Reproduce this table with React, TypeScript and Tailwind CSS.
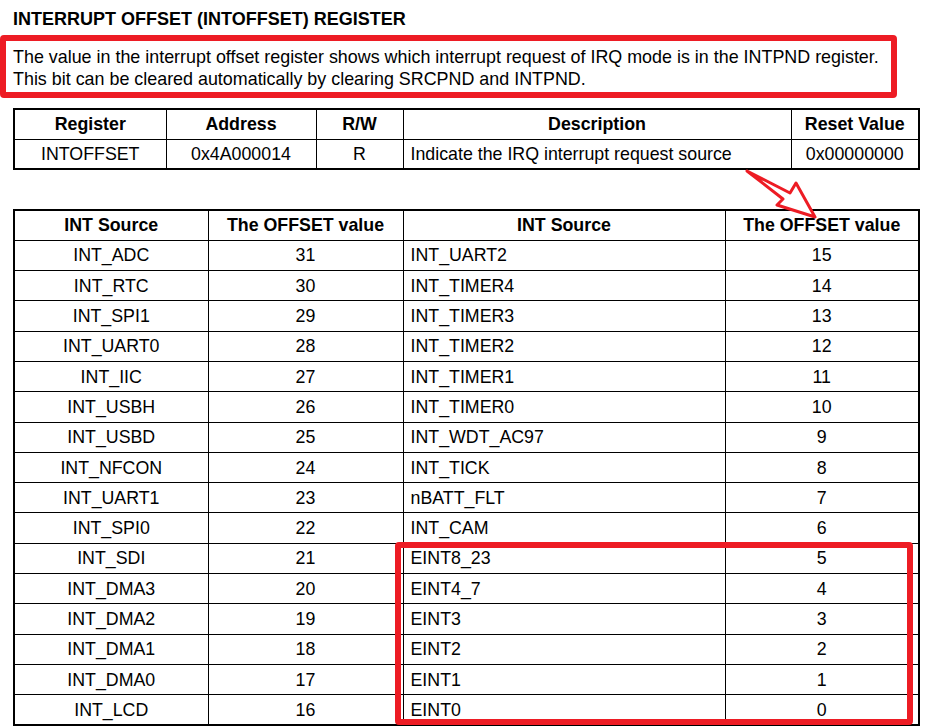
import type { ReactNode } from 'react'

// Register summary row
const regHead = ['Register', 'Address', 'R/W', 'Description', 'Reset Value']

// Offset map: left pair (31..16) and right pair (15..0)
const offsets: [string, number, string, number][] = [
  ['INT_ADC', 31, 'INT_UART2', 15],
  ['INT_RTC', 30, 'INT_TIMER4', 14],
  ['INT_SPI1', 29, 'INT_TIMER3', 13],
  ['INT_UART0', 28, 'INT_TIMER2', 12],
  ['INT_IIC', 27, 'INT_TIMER1', 11],
  ['INT_USBH', 26, 'INT_TIMER0', 10],
  ['INT_USBD', 25, 'INT_WDT_AC97', 9],
  ['INT_NFCON', 24, 'INT_TICK', 8],
  ['INT_UART1', 23, 'nBATT_FLT', 7],
  ['INT_SPI0', 22, 'INT_CAM', 6],
  ['INT_SDI', 21, 'EINT8_23', 5],
  ['INT_DMA3', 20, 'EINT4_7', 4],
  ['INT_DMA2', 19, 'EINT3', 3],
  ['INT_DMA1', 18, 'EINT2', 2],
  ['INT_DMA0', 17, 'EINT1', 1],
  ['INT_LCD', 16, 'EINT0', 0],
]

function Th({ children, w }: { children: ReactNode; w: string }) {
  return (
    <th className={`${w} border border-black p-0 text-center font-bold`}>
      {children}
    </th>
  )
}

function Td({ children, left }: { children: ReactNode; left?: boolean }) {
  return (
    <td className={`border border-black p-0 ${left ? 'pl-[7px] text-left' : 'text-center'}`}>
      {children}
    </td>
  )
}

export default function App() {
  return (
    <div
      className="relative h-[728px] w-[930px] overflow-hidden bg-white text-black"
      style={{ fontFamily: '"Liberation Sans", Arial, sans-serif' }}
    >
      {/* ── Title ─────────────────────────────────────────────── */}
      <h1 className="ml-[13px] pt-[10px] text-[18px] leading-[18px] font-bold">
        INTERRUPT OFFSET (INTOFFSET) REGISTER
      </h1>

      {/* ── Highlighted description ───────────────────────────── */}
      <div className="mt-[7px] w-[897px] rounded-[4px] border-[6px] border-[#ed1c24] pt-[5px] pb-[2px] pl-[7px] text-[17.9px] leading-[22px]">
        <p>The value in the interrupt offset register shows which interrupt request of IRQ mode is in the INTPND register.</p>
        <p>This bit can be cleared automatically by clearing SRCPND and INTPND.</p>
      </div>

      {/* ── Register table ────────────────────────────────────── */}
      <table className="mt-[10px] ml-[13px] w-[905px] table-fixed border-collapse border-2 border-black text-[17.8px] leading-[20px]">
        <thead>
          <tr className="h-[30px]">
            <Th w="w-[152px]">{regHead[0]}</Th>
            <Th w="w-[150px]">{regHead[1]}</Th>
            <Th w="w-[87px]">{regHead[2]}</Th>
            <Th w="w-[388px]">{regHead[3]}</Th>
            <Th w="w-[128px]">{regHead[4]}</Th>
          </tr>
        </thead>
        <tbody>
          <tr className="h-[30px]">
            <Td>INTOFFSET</Td>
            <Td>0x4A000014</Td>
            <Td>R</Td>
            <Td left>Indicate the IRQ interrupt request source</Td>
            <Td>0x00000000</Td>
          </tr>
        </tbody>
      </table>

      {/* ── Offset table ──────────────────────────────────────── */}
      <div className="relative mt-[39px] ml-[13px] w-[905px]">
        <table className="w-[905px] table-fixed border-collapse border-2 border-black text-[17.8px] leading-[20px]">
          <thead>
            <tr className="h-[30.3px]">
              <Th w="w-[194px]">INT Source</Th>
              <Th w="w-[195px]">The OFFSET value</Th>
              <Th w="w-[322px]">INT Source</Th>
              <Th w="w-[194px]">The OFFSET value</Th>
            </tr>
          </thead>
          <tbody>
            {offsets.map(([a, n, b, m]) => (
              <tr key={a} className="h-[30.3px]">
                <Td>{a}</Td>
                <Td>{n}</Td>
                <Td left>{b}</Td>
                <Td>{m}</Td>
              </tr>
            ))}
          </tbody>
        </table>

        {/* highlight over EINT rows */}
        <div className="pointer-events-none absolute top-[333px] left-[382px] h-[183px] w-[518px] rounded-[4px] border-[6px] border-[#ed1c24]" />
      </div>

      {/* ── Arrow annotation ──────────────────────────────────── */}
      <svg
        className="absolute top-[165px] left-[740px] h-[60px] w-[85px]"
        viewBox="0 0 85 60"
        aria-hidden="true"
      >
        <polygon
          points="7,6 50,28 56,18 75,52 37,40 43,34"
          fill="white"
          stroke="#ed1c24"
          strokeWidth={3}
          strokeLinejoin="round"
        />
      </svg>
    </div>
  )
}
